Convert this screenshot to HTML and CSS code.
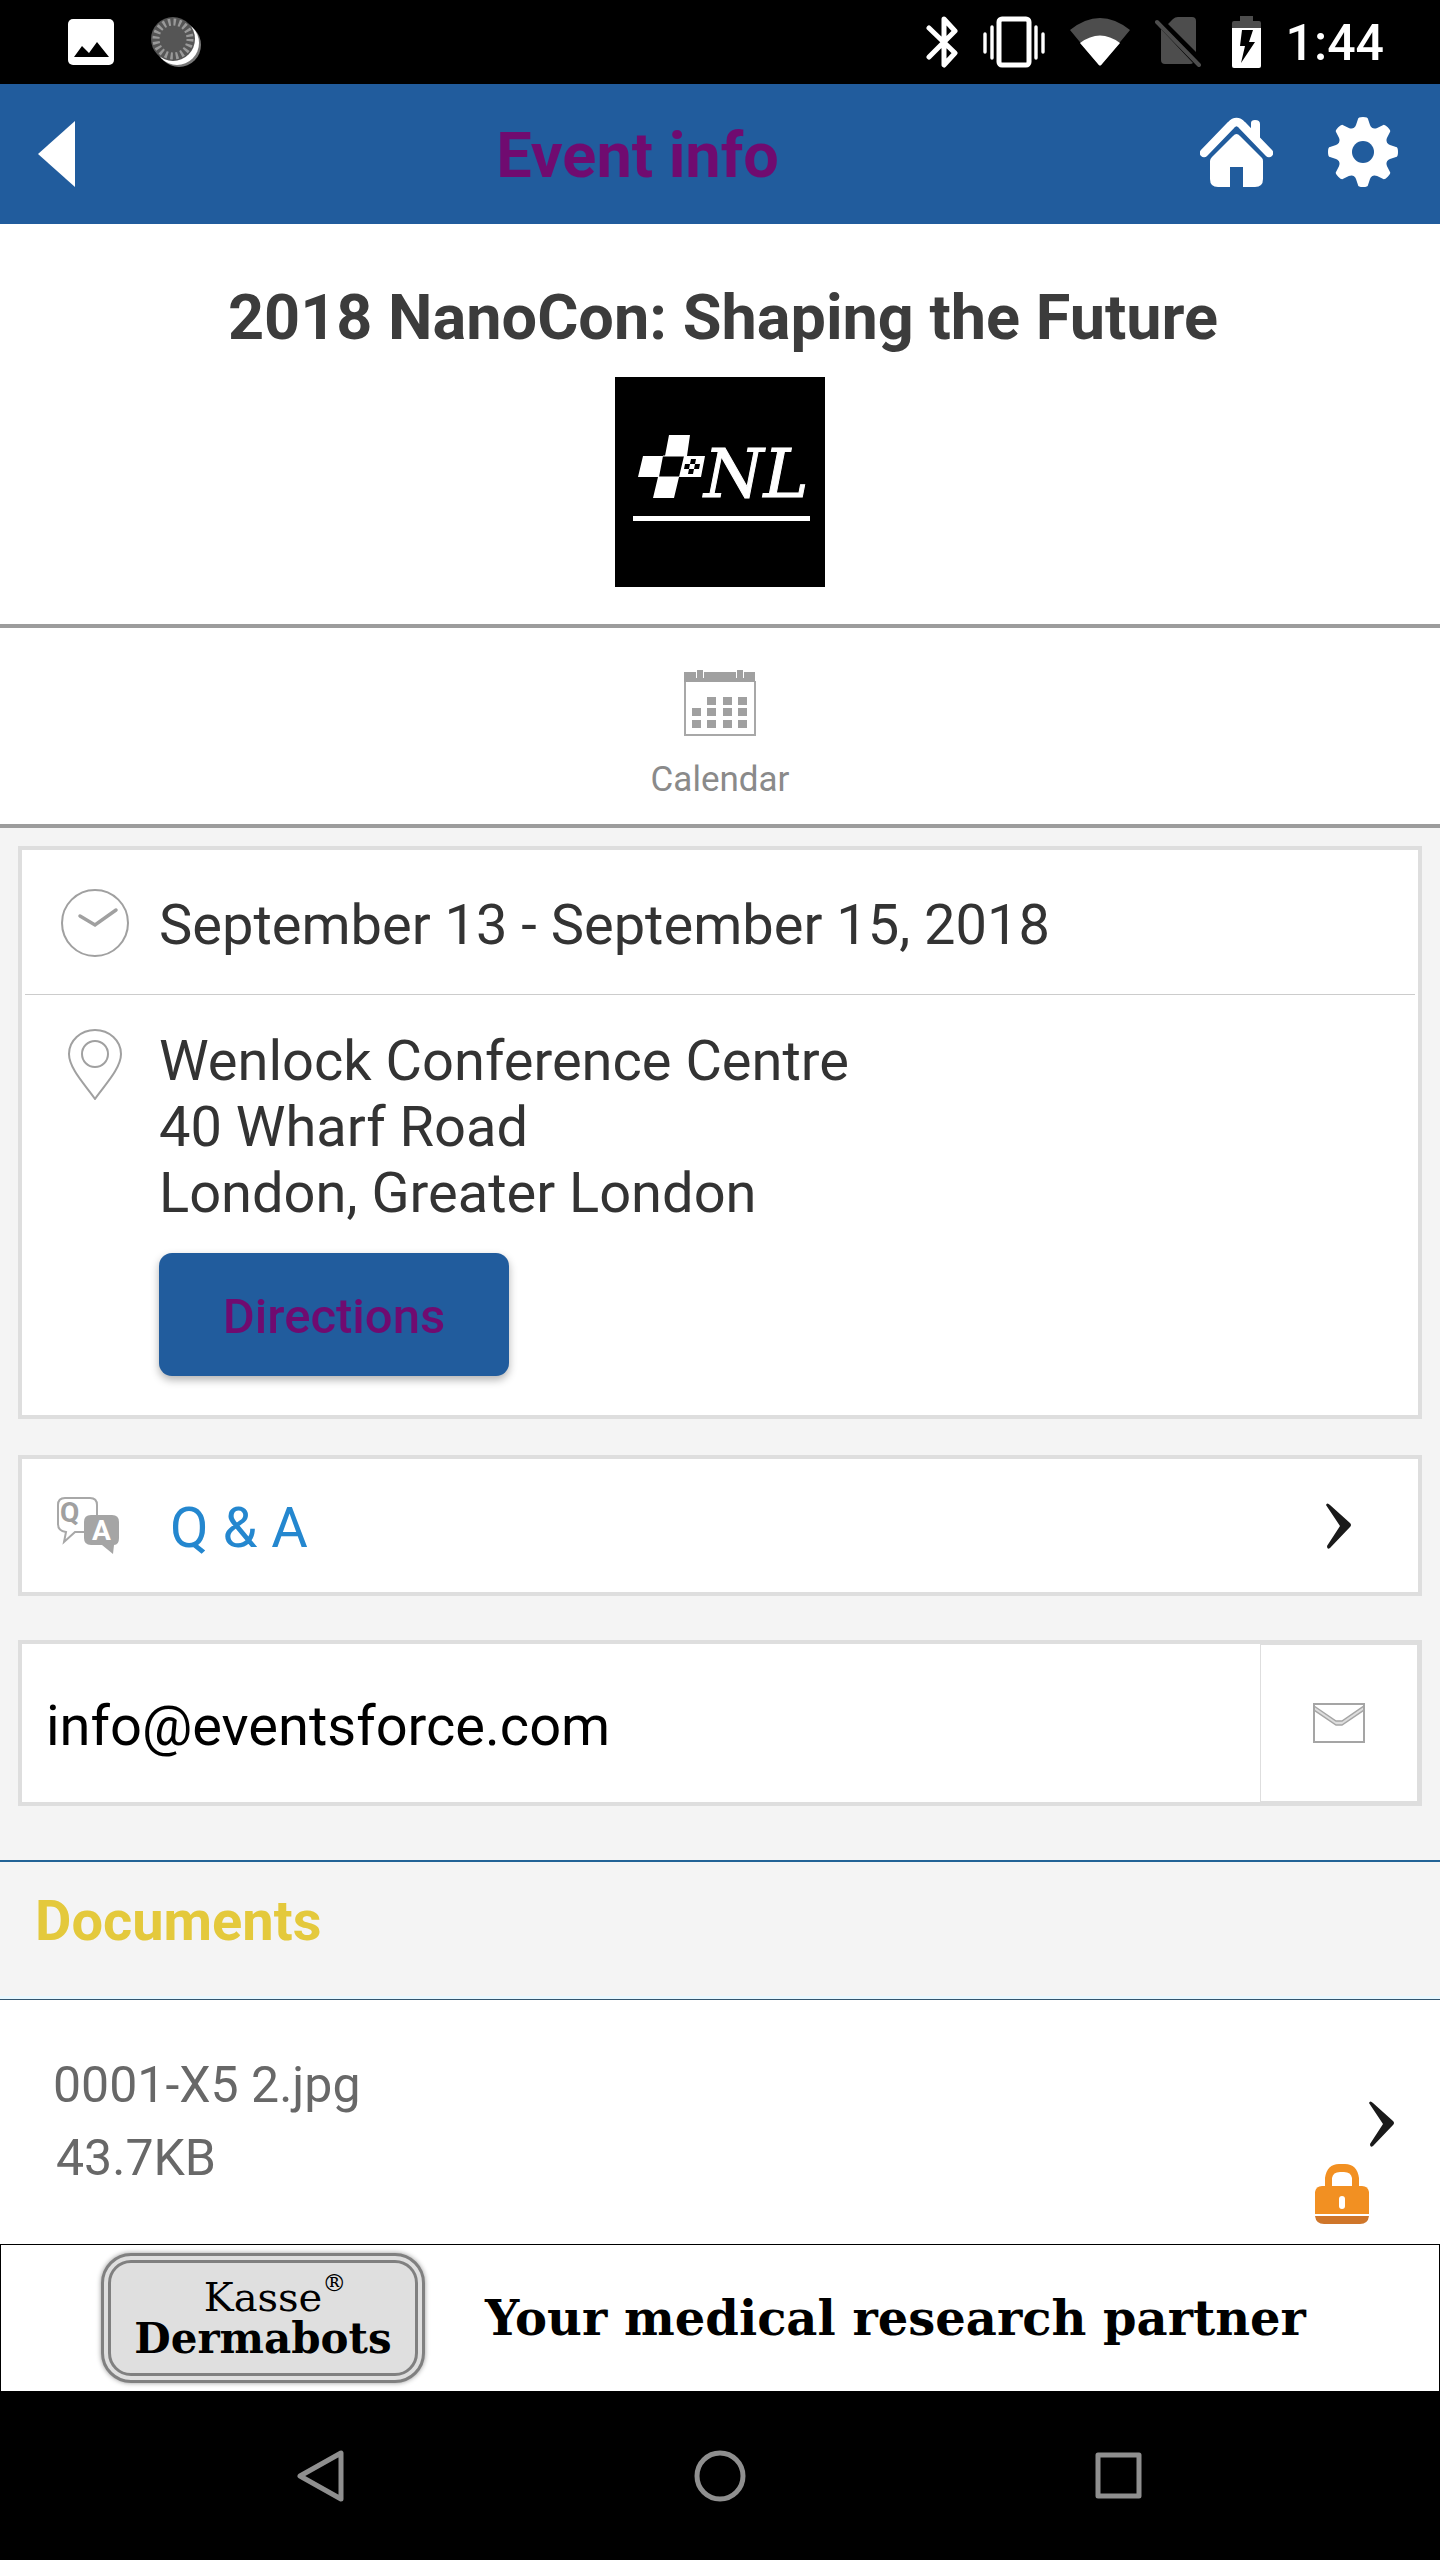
FILE: index.html
```html
<!DOCTYPE html>
<html lang="en">
<head>
  <meta charset="UTF-8" />
  <meta name="viewport" content="width=device-width, initial-scale=1.0"/>
  <title>Event info</title>
  <link rel="stylesheet" href="styles.css">
</head>
<body>
  <div class="status-bar">
    <div class="status-left">
      <svg width="46" height="46" viewBox="0 0 46 46">
        <rect width="46" height="46" rx="5" fill="#fff"/>
        <path d="M6 38 14 27 21 34 29 23 41 38Z" fill="#000"/>
      </svg>
      <svg width="50" height="50" viewBox="0 0 50 50">
        <circle cx="28" cy="28" r="22" fill="#777"/>
        <circle cx="26" cy="26" r="22" fill="#fff"/>
        <circle cx="22" cy="22" r="22" fill="#555"/>
        <circle cx="22" cy="22" r="17" fill="none" stroke="#999" stroke-width="7" stroke-dasharray="2.4 2.94"/>
      </svg>
    </div>
    <div class="status-right">
      <svg width="32" height="52" viewBox="0 0 32 52" fill="none" stroke="#fff" stroke-width="5" stroke-linecap="round" stroke-linejoin="round">
        <path d="M3 12 29 37 18 49V3L29 15 3 41"/>
      </svg>
      <svg width="62" height="52" viewBox="0 0 62 52" fill="none" stroke="#fff">
        <rect x="16" y="3" width="30" height="46" rx="3" stroke-width="5"/>
        <path d="M9 11v31M53 11v31M2 18v18M60 18v18" stroke-width="3.4" stroke-linecap="round"/>
      </svg>
      <svg width="60" height="48" viewBox="0 0 60 48">
        <path d="M0 12Q30-12 60 12L32 46Q30 49 28 46Z" fill="#4d4d4d"/>
        <path d="M10 25Q30 10 50 25L32 46Q30 49 28 46Z" fill="#fff"/>
      </svg>
      <svg width="46" height="50" viewBox="0 0 46 50">
        <path d="M13 7 18 2Q20 0 23 0H37Q41 0 41 4V35ZM6 12 38 46Q37 47 35 47H10Q6 47 6 43Z" fill="#4d4d4d"/>
        <path d="M2 5 44 48" stroke="#4d4d4d" stroke-width="4" stroke-linecap="round"/>
      </svg>
      <svg class="battery" width="29" height="52" viewBox="0 0 29 52">
        <path d="M8 0H21V5H27Q29 5 29 7V13H0V7Q0 5 2 5H8Z" fill="#4d4d4d"/>
        <path d="M0 12H29V50Q29 52 27 52H2Q0 52 0 50Z" fill="#fff"/>
        <path d="M10 14H21L17 26H23L9 47 13 30H8Z" fill="#000"/>
      </svg>
      <span class="clock">1:44</span>
    </div>
  </div>

  <header class="app-bar">
    <button class="icon-btn" aria-label="Back">
      <svg width="37" height="66" viewBox="0 0 37 66"><path d="M37 0V66L0 33Z" fill="#fff"/></svg>
    </button>
    <h1>Event info</h1>
    <div class="app-actions">
      <button class="icon-btn" aria-label="Home">
        <svg width="73" height="70" viewBox="0 0 73 70">
          <path d="M51 6Q51 3 55 3 60 3 60 7V26L51 17Z" fill="#fff"/>
          <path d="M4 36 31 8Q36.500 2 42 8L69 36" fill="none" stroke="#fff" stroke-width="8.500" stroke-linecap="round"/>
          <path d="M33 19Q36.500 15 40 19L62 41Q63 42 63 44V62Q63 70 55 70H43V50H30V70H18Q10 70 10 62V44Q10 42 12 40Z" fill="#fff"/>
        </svg>
      </button>
      <button class="icon-btn" aria-label="Settings">
        <svg width="70" height="70" viewBox="-35 -35 70 70">
          <defs><path id="tooth" d="M-5-33Q-5-35 0-35 5-35 5-33L7-27Q8-24 13-22L0 0-13-22Q-8-24-7-27Z" fill="#fff"/></defs>
          <circle r="24" fill="#fff"/>
          <use href="#tooth"/>
          <use href="#tooth" transform="rotate(45)"/>
          <use href="#tooth" transform="rotate(90)"/>
          <use href="#tooth" transform="rotate(135)"/>
          <use href="#tooth" transform="rotate(180)"/>
          <use href="#tooth" transform="rotate(225)"/>
          <use href="#tooth" transform="rotate(270)"/>
          <use href="#tooth" transform="rotate(315)"/>
          <circle r="11" fill="#215c9d"/>
        </svg>
      </button>
    </div>
  </header>

  <main>
    <section class="event">
      <h2>2018 NanoCon: Shaping the Future</h2>
      <svg class="logo" width="210" height="210" viewBox="0 0 210 210">
        <rect width="210" height="210" fill="#000"/>
        <path d="M54 58H75L72 79H50ZM28 79H48L44 100H23ZM43 100H64L59 121H38ZM69 79H90L86 100H64Z" fill="#fff"/>
        <path d="M48 79H69M44 100H64" stroke="#fff" stroke-width="1"/>
        <path d="M76 82h5l-1 5h-5zM70 87h5l-1 5h-5zM80 87h5l-1 5h-5zM74 92h5l-1 5h-5z" fill="#000"/>
        <text x="89" y="120" class="logo-text">NL</text>
        <rect x="18" y="139" width="177" height="5" fill="#fff"/>
      </svg>
    </section>

    <a class="calendar" href="#calendar">
      <svg width="72" height="66" viewBox="0 0 72 66" fill="#a0a0a0">
        <path d="M1 11V65H71V11" fill="none" stroke="#a8a8a8" stroke-width="2"/>
        <path d="M0 2H12V8H20V2H52V8H60V2H71V12H0ZM13 0H19V8H13ZM53 0H59V8H53Z"/>
        <path d="M23 27h9v8h-9zM39 27h9v8h-9zM54 27h9v8h-9zM8 38h9v8h-9zM23 38h9v8h-9zM39 38h9v8h-9zM54 38h9v8h-9zM8 50h9v8h-9zM23 50h9v8h-9zM39 50h9v8h-9zM54 50h9v8h-9z"/>
      </svg>
      <span>Calendar</span>
    </a>

    <div class="cards">
      <section class="card">
        <div class="row date">
          <svg width="68" height="68" viewBox="0 0 68 68" fill="none" stroke="#a0a0a0">
            <circle cx="34" cy="34" r="33" stroke-width="2"/>
            <path d="M19 27 34 36 55 21" stroke-width="3.500" stroke-linecap="round"/>
          </svg>
          <p>September 13 - September 15, 2018</p>
        </div>
        <div class="row place">
          <svg width="68" height="72" viewBox="0 0 68 72" fill="none" stroke="#a0a0a0" stroke-width="2">
            <path d="M34 71C26 59 8 41 8 26A26 24 0 0 1 60 26C60 41 42 59 34 71Z"/>
            <circle cx="34" cy="26" r="13"/>
          </svg>
          <div>
            <p>Wenlock Conference Centre<br>40 Wharf Road<br>London, Greater London</p>
            <button class="directions">Directions</button>
          </div>
        </div>
      </section>

      <a class="card qa" href="#qa">
        <svg width="63" height="58" viewBox="0 0 63 58">
          <path d="M27 35H18L7 45 9 35Q1 34 1 27V8Q1 1 8 1H33Q40 1 40 8V18" fill="none" stroke="#a8a8a8" stroke-width="2"/>
          <path d="M34 18H55Q62 18 62 25V41Q62 48 57 48L56 57 45 48H34Q27 48 27 41V25Q27 18 34 18Z" fill="#a5a5a5"/>
          <text x="3" y="25" class="qa-letter" fill="#a0a0a0">Q</text>
          <text x="35" y="43" class="qa-letter" fill="#fff">A</text>
        </svg>
        <span>Q &amp; A</span>
        <svg class="chevron" width="25" height="46" viewBox="0 0 25 46"><path d="M0 2Q1-1 4 2L24 20Q26 22 24 24L4 45Q1 47 1 43L14 23Z" fill="#1a1a1a"/></svg>
      </a>

      <div class="card email">
        <a class="address" href="mailto:info@eventsforce.com">info@eventsforce.com</a>
        <a class="mail" href="mailto:info@eventsforce.com" aria-label="Send email">
          <svg width="52" height="40" viewBox="0 0 52 40" fill="none" stroke="#a5a5a5" stroke-width="2">
            <path d="M1 3 23 18H29L51 3V7L29 22H23L1 7Z" fill="#ddd" stroke-width="1.500"/>
            <path d="M1 1H51V39H1Z"/>
          </svg>
        </a>
      </div>
    </div>

    <section class="documents">
      <h3>Documents</h3>
      <a class="document" href="#document">
        <div class="file">
          <span>0001-X5 2.jpg</span>
          <span class="size">43.7KB</span>
        </div>
        <div class="file-icons">
          <svg class="chevron" width="25" height="46" viewBox="0 0 25 46"><path d="M0 2Q1-1 4 2L24 20Q26 22 24 24L4 45Q1 47 1 43L14 23Z" fill="#1a1a1a"/></svg>
          <svg class="lock" width="54" height="60" viewBox="0 0 54 60">
            <path d="M10 23V14Q12 0 24 0H30Q42 0 44 14V23H37V14Q36 8 29 8H25Q18 8 17 14V23Z" fill="#f29022"/>
            <path d="M0 28Q1 22 7 22H47Q53 22 54 28V50H0Z" fill="#f29022"/>
            <path d="M0 52H54Q53 60 45 60H9Q1 60 0 52Z" fill="#cf762a"/>
            <rect x="24" y="32" width="6" height="13" rx="3" fill="#fff"/>
          </svg>
        </div>
      </a>
    </section>
  </main>

  <a class="banner" href="#sponsor">
    <div class="brand">
      <span class="kasse">Kasse<sup>®</sup></span>
      <span class="dermabots">Dermabots</span>
    </div>
    <span class="tagline">Your medical research partner</span>
  </a>

  <nav class="nav-bar">
    <button class="icon-btn" aria-label="Navigate back">
      <svg width="52" height="54" viewBox="0 0 52 54" fill="none" stroke="#8f8f8f" stroke-width="5" stroke-linejoin="round"><path d="M46 4V50L5 27Z"/></svg>
    </button>
    <button class="icon-btn" aria-label="Home screen">
      <svg width="52" height="52" viewBox="0 0 52 52" fill="none" stroke="#8f8f8f" stroke-width="5"><circle cx="26" cy="26" r="23"/></svg>
    </button>
    <button class="icon-btn" aria-label="Recent apps">
      <svg width="47" height="47" viewBox="0 0 47 47" fill="none" stroke="#8f8f8f" stroke-width="5" stroke-linejoin="round"><path d="M3 3H44V44H3Z"/></svg>
    </button>
  </nav>
</body>
</html>
```

FILE: styles.css
```css
* {
  box-sizing: border-box;
}

body {
  margin: 0;
  min-height: 100vh;
  display: flex;
  flex-direction: column;
  font-family: Roboto, sans-serif;
  font-size: 56px;
  line-height: 66px;
  color: #333;
  background: #000;
}

h1, h2, h3, p {
  margin: 0;
}

a {
  color: inherit;
  text-decoration: none;
}

svg {
  display: block;
  flex-shrink: 0;
}

button {
  font-family: inherit;
  border: none;
  cursor: pointer;
}

.icon-btn {
  padding: 0;
  background: none;
}

/* status bar */
.status-bar {
  height: 84px;
  padding: 0 56px 0 68px;
  display: flex;
  align-items: center;
  justify-content: space-between;
}

.status-left {
  display: flex;
  align-items: center;
  gap: 37px;
}

.status-right {
  display: flex;
  align-items: center;
  gap: 25px;
}

.battery {
  margin-left: 6px;
}

.clock {
  padding-top: 2px;
  color: #fff;
  font-size: 50px;
  font-weight: 500;
}

/* header */
.app-bar {
  height: 140px;
  padding: 0 42px 0 38px;
  display: flex;
  align-items: center;
  background: #215c9d;
}

.app-bar h1 {
  flex: 1;
  padding-top: 4px;
  text-align: center;
  font-size: 63px;
  color: #700b70;
}

.app-actions {
  display: flex;
  gap: 55px;
  padding-bottom: 4px;
}

/* event */
.event {
  padding: 56px 0 37px;
  display: flex;
  flex-direction: column;
  align-items: center;
  gap: 21px;
  background: #fff;
  border-bottom: 4px solid #9c9c9c;
}

.event h2 {
  padding-left: 6px;
  font-size: 63px;
  line-height: 76px;
  color: #3c3c3c;
}

.logo-text {
  font-family: "DejaVu Serif", serif;
  font-size: 68px;
  font-style: italic;
  fill: #fff;
  stroke: #fff;
  stroke-width: 1px;
}

.calendar {
  padding: 42px 0 22px;
  display: flex;
  flex-direction: column;
  align-items: center;
  gap: 22px;
  background: #fff;
  border-bottom: 4px solid #9c9c9c;
  font-size: 35px;
  line-height: 44px;
  color: #8a8a8a;
}

/* cards */
.cards {
  padding: 18px 18px 54px;
  background: #f4f4f4;
}

.card {
  background: #fff;
  border: 4px solid #dedede;
}

.row {
  margin: 0 3px;
  padding: 0 36px;
  display: flex;
  gap: 30px;
}

.date {
  height: 145px;
  padding-top: 2px;
  align-items: center;
  border-bottom: 1px solid #ccc;
}

.date p {
  padding-top: 4px;
}

.place {
  padding-top: 33px;
  padding-bottom: 39px;
}

.directions {
  display: block;
  width: 350px;
  height: 123px;
  margin-top: 27px;
  padding: 4px 0 0;
  border-radius: 13px;
  background: #215c9d;
  box-shadow: 0 4px 8px rgba(0,0,0,0.3);
  color: #700b70;
  font-size: 49px;
  font-weight: 500;
}

.qa {
  height: 141px;
  margin-top: 36px;
  padding: 0 67px 0 35px;
  display: flex;
  align-items: center;
  color: #2487cf;
}

.qa span {
  flex: 1;
  padding: 4px 0 0 50px;
}

.qa-letter {
  font-family: Roboto, sans-serif;
  font-size: 28px;
  font-weight: 700;
}

.email {
  margin-top: 44px;
  height: 166px;
  display: flex;
  color: #000;
}

.address {
  flex: 1;
  padding: 6px 0 0 24px;
  display: flex;
  align-items: center;
}

.mail {
  width: 158px;
  display: flex;
  align-items: center;
  justify-content: center;
  border: 1px solid #dedede;
}

/* documents */
.documents {
  background: #fff;
}

.documents h3 {
  padding: 26px 35px 45px;
  border-top: 2px solid #226396;
  border-bottom: 1px solid #33566f;
  background: #f4f4f4;
  box-shadow: inset 0 -3px #e9f8ff;
  font-size: 56px;
  color: #e4c93c;
}

.document {
  padding: 49px 46px 20px 53px;
  display: flex;
  justify-content: space-between;
  font-size: 50px;
  line-height: 73px;
  color: #686868;
}

.file {
  display: flex;
  flex-direction: column;
  padding-bottom: 29px;
}

.size {
  padding-left: 3px;
}

.file-icons {
  display: flex;
  flex-direction: column;
  align-items: flex-end;
  justify-content: flex-end;
  gap: 17px;
}

.lock {
  margin-right: 25px;
}

/* sponsor banner */
.banner {
  height: 147px;
  padding-left: 100px;
  display: flex;
  align-items: center;
  gap: 60px;
  background: #fff;
  border: 1px solid #000;
  border-bottom: none;
  font-family: "DejaVu Serif", serif;
  color: #000;
}

.brand {
  width: 324px;
  height: 130px;
  display: flex;
  flex-direction: column;
  align-items: center;
  justify-content: center;
  border: 10px double #808080;
  border-radius: 30px;
  background: #dfdfdf;
  box-shadow: 0 0 5px #999;
  font-size: 40px;
  line-height: 42px;
}

.kasse {
  position: relative;
}

.kasse sup {
  position: absolute;
  left: 100%;
  top: -14px;
  font-size: 24px;
}

.dermabots {
  font-size: 42px;
  font-weight: bold;
}

.tagline {
  font-size: 48px;
  font-weight: bold;
}

/* system navigation */
.nav-bar {
  flex: 1;
  min-height: 169px;
  padding: 0 122px;
  display: grid;
  grid-template-columns: repeat(3, 1fr);
  align-items: center;
  justify-items: center;
}
```
